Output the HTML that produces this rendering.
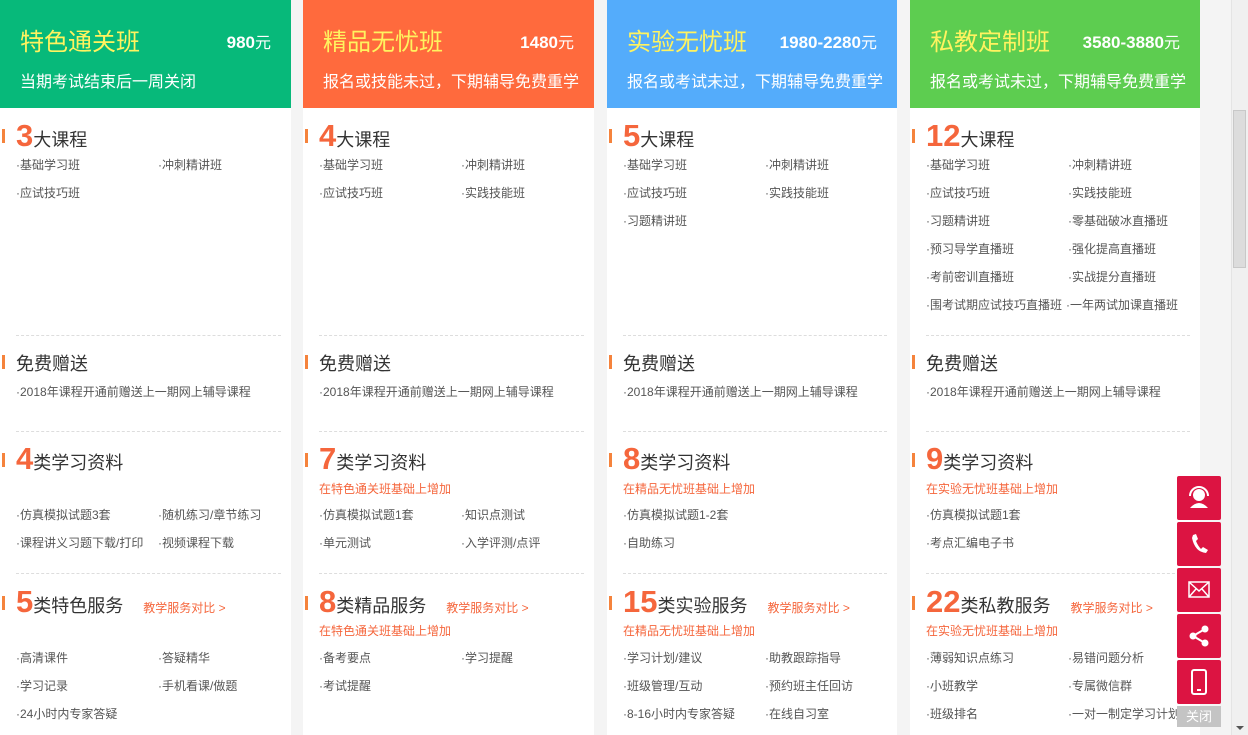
<!DOCTYPE html>
<html><head><meta charset="utf-8"><style>
*{margin:0;padding:0;box-sizing:border-box}
body{width:1248px;height:735px;overflow:hidden;background:#f4f4f4;font-family:"Liberation Sans","Noto Sans CJK SC",sans-serif;position:relative}
.col{position:absolute;top:0;width:291px;height:735px;background:#fff}
.hd{position:absolute;left:0;top:0;width:100%;height:108px;color:#fff}
.t{position:absolute;left:20px;top:22px;font-size:24px;color:#fff35f}
.p{position:absolute;right:20px;top:29px;font-size:17px;font-weight:bold}
.p span{font-weight:normal;font-size:16px}
.s{position:absolute;left:20px;top:68px;font-size:16px}
.a{position:absolute;font-size:12px;color:#555;white-space:nowrap}
.h{position:absolute;left:16px;font-size:18px;color:#333;white-space:nowrap}
.h b{font-size:31px;color:#f5663c;font-weight:bold}
.bar{position:absolute;left:2px;width:3px;height:14px;background:#f5833c}
.n{position:absolute;left:16px;font-size:12px;color:#f5663c}
.cmp{font-size:12px;color:#f5663c;margin-left:20px}
.dv{position:absolute;left:16px;right:10px;border-top:1px dashed #ddd}
.sb{position:absolute;left:1177px;width:44px;height:44px;background:#dc1442;border-radius:2px}
</style></head><body>

<div class="col" style="left:0">
<div class="hd" style="background:#07b97a"><div class="t">特色通关班</div><div class="p">980<span>元</span></div><div class="s">当期考试结束后一周关闭</div></div>
<div class="bar" style="top:129px"></div><div class="h" style="top:118px"><b>3</b>大课程</div>
<div class="a" style="left:16px;top:156px">·基础学习班</div><div class="a" style="left:158px;top:156px">·冲刺精讲班</div>
<div class="a" style="left:16px;top:184px">·应试技巧班</div>
<div class="dv" style="top:335px"></div>
<div class="bar" style="top:355px"></div><div class="h" style="top:350px">免费赠送</div>
<div class="a" style="left:16px;top:383px">·2018年课程开通前赠送上一期网上辅导课程</div>
<div class="dv" style="top:431px"></div>
<div class="bar" style="top:453px"></div><div class="h" style="top:441px"><b>4</b>类学习资料</div>
<div class="a" style="left:16px;top:506px">·仿真模拟试题3套</div><div class="a" style="left:158px;top:506px">·随机练习/章节练习</div>
<div class="a" style="left:16px;top:534px">·课程讲义习题下载/打印</div><div class="a" style="left:158px;top:534px">·视频课程下载</div>
<div class="dv" style="top:573px"></div>
<div class="bar" style="top:596px"></div><div class="h" style="top:584px"><b>5</b>类特色服务<span class="cmp">教学服务对比 ></span></div>
<div class="a" style="left:16px;top:649px">·高清课件</div><div class="a" style="left:158px;top:649px">·答疑精华</div>
<div class="a" style="left:16px;top:677px">·学习记录</div><div class="a" style="left:158px;top:677px">·手机看课/做题</div>
<div class="a" style="left:16px;top:705px">·24小时内专家答疑</div>
</div>

<div class="col" style="left:303px">
<div class="hd" style="background:#ff6a3d"><div class="t">精品无忧班</div><div class="p">1480<span>元</span></div><div class="s">报名或技能未过，下期辅导免费重学</div></div>
<div class="bar" style="top:129px"></div><div class="h" style="top:118px"><b>4</b>大课程</div>
<div class="a" style="left:16px;top:156px">·基础学习班</div><div class="a" style="left:158px;top:156px">·冲刺精讲班</div>
<div class="a" style="left:16px;top:184px">·应试技巧班</div><div class="a" style="left:158px;top:184px">·实践技能班</div>
<div class="dv" style="top:335px"></div>
<div class="bar" style="top:355px"></div><div class="h" style="top:350px">免费赠送</div>
<div class="a" style="left:16px;top:383px">·2018年课程开通前赠送上一期网上辅导课程</div>
<div class="dv" style="top:431px"></div>
<div class="bar" style="top:453px"></div><div class="h" style="top:441px"><b>7</b>类学习资料</div>
<div class="n" style="top:480px">在特色通关班基础上增加</div>
<div class="a" style="left:16px;top:506px">·仿真模拟试题1套</div><div class="a" style="left:158px;top:506px">·知识点测试</div>
<div class="a" style="left:16px;top:534px">·单元测试</div><div class="a" style="left:158px;top:534px">·入学评测/点评</div>
<div class="dv" style="top:573px"></div>
<div class="bar" style="top:596px"></div><div class="h" style="top:584px"><b>8</b>类精品服务<span class="cmp">教学服务对比 ></span></div>
<div class="n" style="top:622px">在特色通关班基础上增加</div>
<div class="a" style="left:16px;top:649px">·备考要点</div><div class="a" style="left:158px;top:649px">·学习提醒</div>
<div class="a" style="left:16px;top:677px">·考试提醒</div>
</div>

<div class="col" style="left:607px;width:290px">
<div class="hd" style="background:#54acfb"><div class="t">实验无忧班</div><div class="p">1980-2280<span>元</span></div><div class="s">报名或考试未过，下期辅导免费重学</div></div>
<div class="bar" style="top:129px"></div><div class="h" style="top:118px"><b>5</b>大课程</div>
<div class="a" style="left:16px;top:156px">·基础学习班</div><div class="a" style="left:158px;top:156px">·冲刺精讲班</div>
<div class="a" style="left:16px;top:184px">·应试技巧班</div><div class="a" style="left:158px;top:184px">·实践技能班</div>
<div class="a" style="left:16px;top:212px">·习题精讲班</div>
<div class="dv" style="top:335px"></div>
<div class="bar" style="top:355px"></div><div class="h" style="top:350px">免费赠送</div>
<div class="a" style="left:16px;top:383px">·2018年课程开通前赠送上一期网上辅导课程</div>
<div class="dv" style="top:431px"></div>
<div class="bar" style="top:453px"></div><div class="h" style="top:441px"><b>8</b>类学习资料</div>
<div class="n" style="top:480px">在精品无忧班基础上增加</div>
<div class="a" style="left:16px;top:506px">·仿真模拟试题1-2套</div>
<div class="a" style="left:16px;top:534px">·自助练习</div>
<div class="dv" style="top:573px"></div>
<div class="bar" style="top:596px"></div><div class="h" style="top:584px"><b>15</b>类实验服务<span class="cmp">教学服务对比 ></span></div>
<div class="n" style="top:622px">在精品无忧班基础上增加</div>
<div class="a" style="left:16px;top:649px">·学习计划/建议</div><div class="a" style="left:158px;top:649px">·助教跟踪指导</div>
<div class="a" style="left:16px;top:677px">·班级管理/互动</div><div class="a" style="left:158px;top:677px">·预约班主任回访</div>
<div class="a" style="left:16px;top:705px">·8-16小时内专家答疑</div><div class="a" style="left:158px;top:705px">·在线自习室</div>
</div>

<div class="col" style="left:910px;width:290px">
<div class="hd" style="background:#5dcd50"><div class="t">私教定制班</div><div class="p">3580-3880<span>元</span></div><div class="s">报名或考试未过，下期辅导免费重学</div></div>
<div class="bar" style="top:129px"></div><div class="h" style="top:118px"><b>12</b>大课程</div>
<div class="a" style="left:16px;top:156px">·基础学习班</div><div class="a" style="left:158px;top:156px">·冲刺精讲班</div>
<div class="a" style="left:16px;top:184px">·应试技巧班</div><div class="a" style="left:158px;top:184px">·实践技能班</div>
<div class="a" style="left:16px;top:212px">·习题精讲班</div><div class="a" style="left:158px;top:212px">·零基础破冰直播班</div>
<div class="a" style="left:16px;top:240px">·预习导学直播班</div><div class="a" style="left:158px;top:240px">·强化提高直播班</div>
<div class="a" style="left:16px;top:268px">·考前密训直播班</div><div class="a" style="left:158px;top:268px">·实战提分直播班</div>
<div class="a" style="left:16px;top:296px">·围考试期应试技巧直播班</div><div class="a" style="left:156px;top:296px">·一年两试加课直播班</div>
<div class="dv" style="top:335px"></div>
<div class="bar" style="top:355px"></div><div class="h" style="top:350px">免费赠送</div>
<div class="a" style="left:16px;top:383px">·2018年课程开通前赠送上一期网上辅导课程</div>
<div class="dv" style="top:431px"></div>
<div class="bar" style="top:453px"></div><div class="h" style="top:441px"><b>9</b>类学习资料</div>
<div class="n" style="top:480px">在实验无忧班基础上增加</div>
<div class="a" style="left:16px;top:506px">·仿真模拟试题1套</div>
<div class="a" style="left:16px;top:534px">·考点汇编电子书</div>
<div class="dv" style="top:573px"></div>
<div class="bar" style="top:596px"></div><div class="h" style="top:584px"><b>22</b>类私教服务<span class="cmp">教学服务对比 ></span></div>
<div class="n" style="top:622px">在实验无忧班基础上增加</div>
<div class="a" style="left:16px;top:649px">·薄弱知识点练习</div><div class="a" style="left:158px;top:649px">·易错问题分析</div>
<div class="a" style="left:16px;top:677px">·小班教学</div><div class="a" style="left:158px;top:677px">·专属微信群</div>
<div class="a" style="left:16px;top:705px">·班级排名</div><div class="a" style="left:158px;top:705px">·一对一制定学习计划</div>
</div>

<div class="sb" style="top:476px"><svg width="44" height="44" viewBox="0 0 44 44"><circle cx="22" cy="19" r="6" fill="#fff"/><path d="M13 32 Q22 22 31 32 Z" fill="#fff"/><path d="M13 20 A9 9 0 0 1 31 20" stroke="#fff" stroke-width="2" fill="none"/></svg></div>
<div class="sb" style="top:522px"><svg width="44" height="44" viewBox="0 0 44 44"><path d="M16 13 L19 12 L21 17 L19 19 Q21 24 24 27 L26 25 L31 28 L29 31 Q18 30 15 16 Z" fill="#fff"/></svg></div>
<div class="sb" style="top:568px"><svg width="44" height="44" viewBox="0 0 44 44"><rect x="12" y="14" width="20" height="15" fill="none" stroke="#fff" stroke-width="1.5"/><path d="M12 14 L22 23 L32 14 M12 29 L19 21 M32 29 L25 21" stroke="#fff" stroke-width="1.5" fill="none"/></svg></div>
<div class="sb" style="top:614px"><svg width="44" height="44" viewBox="0 0 44 44"><path d="M28 15 L16 22 L28 29" stroke="#fff" stroke-width="2" fill="none"/><circle cx="28" cy="15" r="3.5" fill="#fff"/><circle cx="16" cy="22" r="3.5" fill="#fff"/><circle cx="28" cy="29" r="3.5" fill="#fff"/></svg></div>
<div class="sb" style="top:660px"><svg width="44" height="44" viewBox="0 0 44 44"><rect x="15" y="10" width="14" height="24" rx="2" fill="none" stroke="#fff" stroke-width="2"/><rect x="20" y="29" width="4" height="2" fill="#fff"/></svg></div>
<div style="position:absolute;left:1177px;top:706px;width:44px;height:21px;background:#c4c4c4;color:#fff;font-size:13px;text-align:center;line-height:21px">关闭</div>

<div style="position:absolute;left:1231px;top:0;width:17px;height:735px;background:#f0f0f0;border-left:1px solid #e4e4e4"></div>
<div style="position:absolute;left:1233px;top:110px;width:13px;height:158px;background:#dcdcdc;border:1px solid #c8c8c8"></div>
<div style="position:absolute;left:1236px;top:726px;width:0;height:0;border-left:4px solid transparent;border-right:4px solid transparent;border-top:4px solid #555"></div>
</body></html>
